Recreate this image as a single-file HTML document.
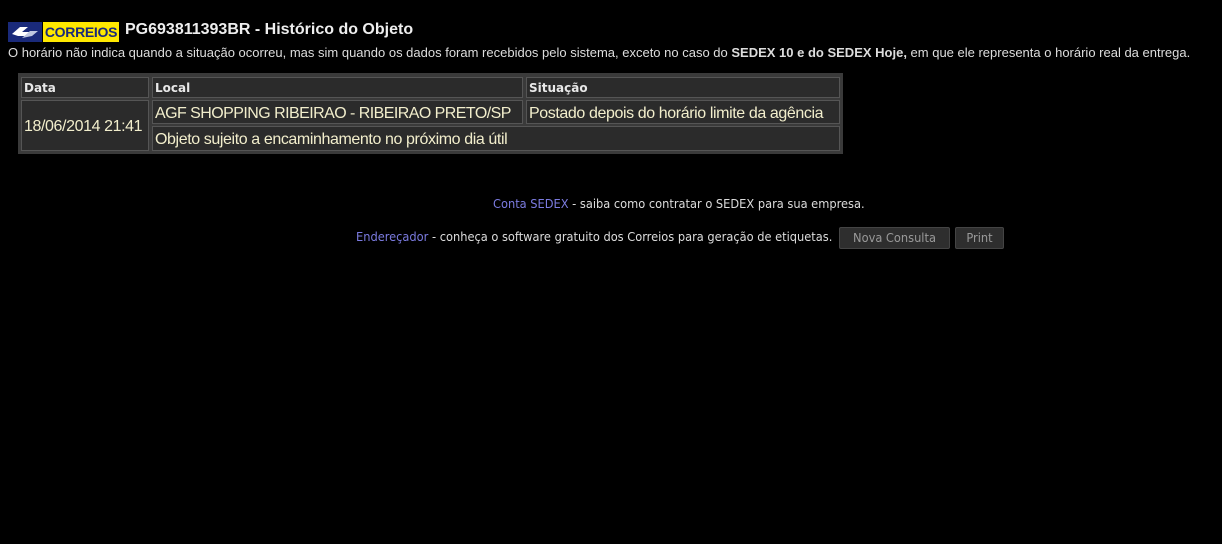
<!DOCTYPE html>
<html><head><meta charset="utf-8"><style>
body{margin:0;background:#000;color:#ddd;font-family:"Liberation Sans",sans-serif;width:1222px;height:544px;overflow:hidden;position:relative}
.a{position:absolute;white-space:nowrap}
.cell{position:absolute;background:#2b2b2b;border:1px solid #555;box-sizing:border-box;color:#f2eecc;font-size:16px;line-height:26px;padding-left:2px;white-space:nowrap;overflow:hidden;letter-spacing:-0.4px}
.hd{font-family:"DejaVu Sans",sans-serif;font-weight:bold;font-size:12px;color:#e8e8e8;line-height:20px;letter-spacing:0}
.btn{position:absolute;background:#2e2e2e;border:1px solid #444;border-radius:2px;color:#999;font-family:"DejaVu Sans Condensed","DejaVu Sans",sans-serif;font-size:12.7px;text-align:center;line-height:20px;height:22px;box-sizing:border-box}
.sm{font-family:"DejaVu Sans Condensed","DejaVu Sans",sans-serif;font-size:12.7px;color:#ddd}
</style></head><body>
<svg class="a" style="left:8px;top:22px" width="34" height="20" viewBox="0 0 34 20">
<rect width="34" height="20" fill="#1a2a7a"/>
<path d="M4 12 L12 5 L20 5 L14 10 L24 10 L20 14 L10 14 Z" fill="#fff"/>
<path d="M14 16 L22 9 L30 9 L24 14 Z" fill="#c0c8e0"/>
</svg>
<div class="a" style="left:43px;top:22px;width:76px;height:20px;background:#ffe800;color:#1a2a7a;font-weight:bold;font-size:14px;line-height:20px;text-align:center;letter-spacing:-0.3px;overflow:hidden">CORREIOS</div>
<div class="a" style="left:125px;top:21px;font-size:16px;font-weight:bold;color:#eee">PG693811393BR - Histórico do Objeto</div>
<div class="a" style="left:8px;top:45px;font-size:13px;color:#ddd">O horário não indica quando a situação ocorreu, mas sim quando os dados foram recebidos pelo sistema, exceto no caso do <b>SEDEX 10 e do SEDEX Hoje,</b> em que ele representa o horário real da entrega.</div>
<div class="a" style="left:18px;top:73px;width:825px;height:81px;background:#3a3a3a"></div>
<div class="cell hd" style="left:21px;top:77px;width:128px;height:21px">Data</div>
<div class="cell hd" style="left:152px;top:77px;width:371px;height:21px">Local</div>
<div class="cell hd" style="left:526px;top:77px;width:314px;height:21px">Situação</div>
<div class="cell" style="left:21px;top:100px;width:128px;height:51px;line-height:51px">18/06/2014 21:41</div>
<div class="cell" style="left:152px;top:100px;width:371px;height:24px;line-height:25px;letter-spacing:-0.55px">AGF SHOPPING RIBEIRAO - RIBEIRAO PRETO/SP</div>
<div class="cell" style="left:526px;top:100px;width:314px;height:24px;line-height:25px">Postado depois do horário limite da agência</div>
<div class="cell" style="left:152px;top:126px;width:688px;height:25px">Objeto sujeito a encaminhamento no próximo dia útil</div>
<div class="a sm" style="left:493px;top:196px"><span style="color:#7b7be0">Conta SEDEX</span> - saiba como contratar o SEDEX para sua empresa.</div>
<div class="a sm" style="left:356px;top:229px"><span style="color:#7b7be0">Endereçador</span> - conheça o software gratuito dos Correios para geração de etiquetas.</div>
<div class="btn" style="left:839px;top:227px;width:111px">Nova Consulta</div>
<div class="btn" style="left:955px;top:227px;width:49px">Print</div>
</body></html>
